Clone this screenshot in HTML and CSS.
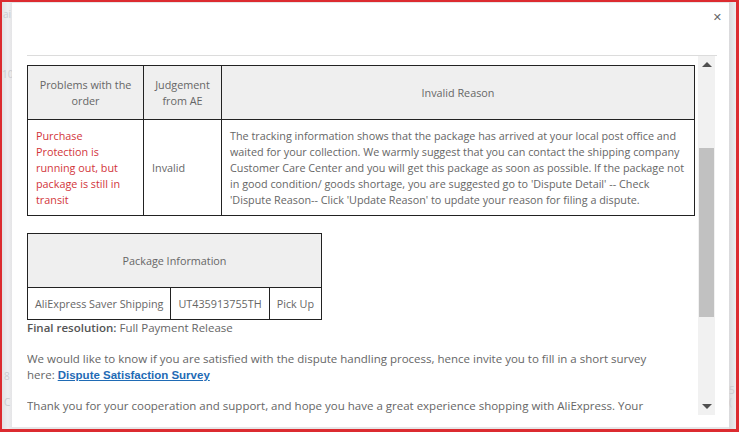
FILE: index.html
```
<!DOCTYPE html>
<html>
<head>
<meta charset="utf-8">
<link rel="stylesheet" href="styles.css">
</head>
<body>
<div class="frame">
  <div class="side side-left">
    <span class="ghost g1">ai</span>
    <span class="ghost g2">10</span>
    <span class="ghost g3">8</span>
    <span class="ghost g4">C</span>
  </div>
  <div class="modal">
    <div class="modal-head"><span class="close">&#x2715;</span></div>
    <div class="divider"></div>
    <div class="modal-body">
      <div class="content">
        <table class="grid judge">
          <thead>
            <tr>
              <th class="c1">Problems with the order</th>
              <th class="c2">Judgement from AE</th>
              <th class="c3">Invalid Reason</th>
            </tr>
          </thead>
          <tbody>
            <tr>
              <td class="red">Purchase Protection is running out, but package is still in transit</td>
              <td class="verdict">Invalid</td>
              <td class="reason">The tracking information shows that the package has arrived at your local post office and waited for your collection. We warmly suggest that you can contact the shipping company Customer Care Center and you will get this package as soon as possible. If the package not in good condition/ goods shortage, you are suggested go to 'Dispute Detail' -- Check 'Dispute Reason-- Click 'Update Reason' to update your reason for filing a dispute.</td>
            </tr>
          </tbody>
        </table>
        <table class="grid pkg">
          <thead>
            <tr><th colspan="3">Package Information</th></tr>
          </thead>
          <tbody>
            <tr>
              <td>AliExpress Saver Shipping</td>
              <td>UT435913755TH</td>
              <td>Pick Up</td>
            </tr>
          </tbody>
        </table>
        <p class="resolution"><b>Final resolution:</b> Full Payment Release</p>
        <p class="para">We would like to know if you are satisfied with the dispute handling process, hence invite you to fill in a short survey here: <a class="survey" href="#">Dispute Satisfaction Survey</a></p>
        <p class="para">Thank you for your cooperation and support, and hope you have a great experience shopping with AliExpress. Your cooperation is highly appreciated.</p>
      </div>
      <div class="scrollbar">
        <div class="sb-btn"><span class="arrow up"></span></div>
        <div class="sb-track"><div class="sb-thumb"></div></div>
        <div class="sb-btn"><span class="arrow down"></span></div>
      </div>
    </div>
  </div>
  <div class="side side-right">
    <span class="ghost g5">5</span>
    <span class="ghost g6">(</span>
  </div>
</div>
</body>
</html>
```
FILE: styles.css
```
* { box-sizing: border-box; }
html, body { margin: 0; padding: 0; }
body {
  width: 739px;
  height: 432px;
  overflow: hidden;
  background: #fff;
  font-family: "Open Sans", "Liberation Sans", sans-serif;
}
.frame {
  width: 739px;
  height: 432px;
  border-top: 2px solid #dc2b30;
  border-left: 2px solid #dc2b30;
  border-right: 3px solid #dc2b30;
  border-bottom: 3px solid #dc2b30;
  display: flex;
  background: #e6e6e8;
}
.side {
  display: flex;
  flex-direction: column;
  overflow: hidden;
  color: #cbcbcf;
  font-size: 10px;
}
.side-left { width: 10px; background: linear-gradient(to right, #e2e2e4, #eeeef0 60%, #e4e4e6); }
.side-right { width: 7px; background: linear-gradient(to right, #d9d9db, #ececee); }
.ghost { display: block; line-height: 12px; }
.g1 { margin-top: 6px; margin-left: 1px; }
.g2 { margin-top: 48px; }
.g3 { margin-top: 290px; margin-left: 2px; }
.g4 { margin-top: 14px; margin-left: 2px; }
.g5 { margin-top: 382px; }
.g6 { margin-top: 0; }

.modal {
  flex: 1;
  margin: 1px 0 2px 0;
  background: #fff;
  padding: 0 8px 0 15px;
  display: flex;
  flex-direction: column;
}
.modal-head {
  height: 52px;
  display: flex;
  justify-content: flex-end;
  align-items: flex-start;
  padding-top: 8px;
}
.close {
  font-family: "DejaVu Sans", sans-serif;
  font-size: 11px;
  font-weight: bold;
  color: #666;
  line-height: 14px;
  margin-right: -1px;
}
.divider {
  height: 1px;
  background: #dcdcdc;
  margin-right: 4px;
}
.modal-body {
  height: 359px;
  display: flex;
  gap: 3px;
}
.content {
  width: 668px;
  padding-top: 9px;
  overflow: hidden;
  color: #666;
  font-size: 10.8px;
  line-height: 16px;
}
.grid {
  border-collapse: collapse;
  border: 1px solid #222;
}
.grid th, .grid td {
  border: 1px solid #222;
  font-weight: normal;
  color: #666;
  vertical-align: middle;
}
.grid th {
  background: #efefef;
  text-align: center;
}
.judge { width: 668px; table-layout: fixed; }
.judge th { height: 54px; padding: 4px 8px; }
.judge .c1 { width: 116px; }
.judge .c2 { width: 78px; }
.judge td { padding: 6px 8px; height: 96px; }
.judge td.red { color: #d2343a; padding-right: 14px; }
.judge td.reason { padding-right: 3px; }

.pkg { margin-top: 17px; }
.pkg th { height: 54px; }
.pkg td { height: 32px; padding: 0 7px; text-align: center; white-space: nowrap; }

.resolution { margin: 0; color: #666; font-size: 11.5px; }
.resolution b { font-weight: 600; color: #555; }
.para { margin: 15px 0 0 0; color: #666; max-width: 645px; font-size: 11.5px; line-height: 16px; }
.survey {
  font-family: "Liberation Sans", Arial, sans-serif;
  font-weight: bold;
  font-size: 11.5px;
  color: #1f6bb5;
  text-decoration: underline;
}

.scrollbar {
  width: 17px;
  background: #f1f1f1;
  display: flex;
  flex-direction: column;
}
.sb-btn {
  height: 17px;
  display: flex;
  align-items: center;
  justify-content: center;
}
.sb-track {
  flex: 1;
  padding-top: 75px;
}
.sb-thumb {
  height: 169px;
  background: #c1c1c1;
  margin: 0 1px;
}
.arrow {
  width: 0;
  height: 0;
  border-left: 5px solid transparent;
  border-right: 5px solid transparent;
}
.arrow.up { border-bottom: 5px solid #505050; }
.arrow.down { border-top: 5px solid #505050; }
```
